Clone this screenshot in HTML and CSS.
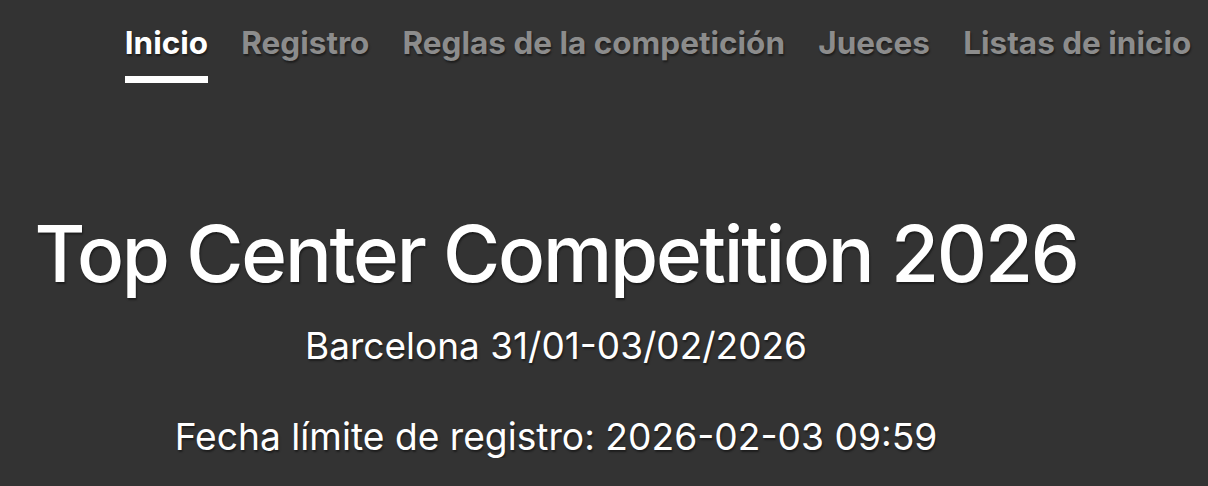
FILE: index.html
```html
<!DOCTYPE html>
<html lang="es">
<head>
<meta charset="utf-8">
<title>Top Center Competition 2026</title>
<link rel="stylesheet" href="styles.css">
</head>
<body>
<nav class="nav">
  <a class="nav-link active" href="#"><span class="nav-label">Inicio</span></a>
  <a class="nav-link" href="#"><span class="nav-label">Registro</span></a>
  <a class="nav-link" href="#"><span class="nav-label">Reglas de la competición</span></a>
  <a class="nav-link" href="#"><span class="nav-label">Jueces</span></a>
  <a class="nav-link" href="#"><span class="nav-label">Listas de inicio</span></a>
</nav>
<main class="hero">
  <h1 class="title">Top Center Competition 2026</h1>
  <p class="subtitle">Barcelona 31/01-03/02/2026</p>
  <p class="deadline">Fecha límite de registro: 2026-02-03 09:59</p>
</main>
</body>
</html>
```
FILE: styles.css
```css
html, body {
  margin: 0;
  padding: 0;
}
body {
  background: #333333;
  color: #ffffff;
  font-family: Inter, "Noto Sans", sans-serif;
  text-shadow: 1px 2px 2px rgba(0, 0, 0, 0.45);
}
.nav {
  display: flex;
  justify-content: flex-end;
  padding: 25px 0 0;
}
.nav-link {
  display: block;
  padding: 0 16.6px;
  color: #8c8c8c;
  font-size: 31.5px;
  font-weight: 700;
  line-height: 36px;
  text-decoration: none;
}
.nav-label {
  display: block;
  padding-bottom: 15px;
  border-bottom: 7px solid transparent;
}
.nav-link.active {
  color: #ffffff;
}
.nav-link.active .nav-label {
  border-bottom-color: #ffffff;
}
.hero {
  width: 1112px;
  text-align: center;
  padding-top: 124px;
}
.title {
  margin: 0;
  font-size: 78px;
  font-weight: 500;
  line-height: 94px;
  letter-spacing: -2.25px;
}
.subtitle {
  margin: 23px 0 0;
  font-size: 37px;
  font-weight: 400;
  line-height: 43px;
}
.deadline {
  margin: 48px 0 0;
  font-size: 37.2px;
  font-weight: 400;
  line-height: 43px;
}
```
